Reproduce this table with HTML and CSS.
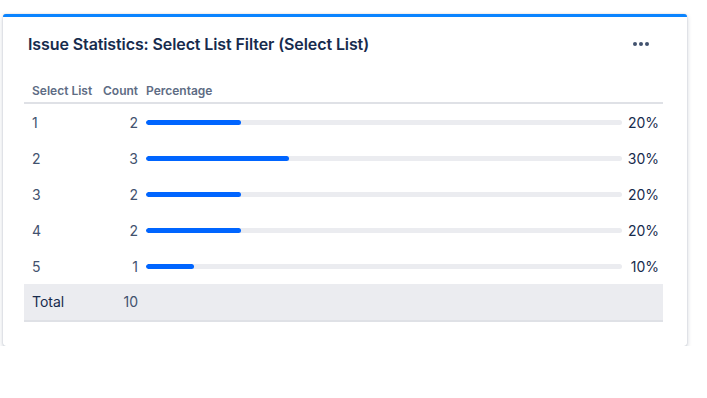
FILE: index.html
```html
<!DOCTYPE html>
<html>
<head>
<meta charset="utf-8">
<link rel="stylesheet" href="styles.css">
</head>
<body>
<div class="card">
  <div class="card-header">
    <h2 class="title">Issue Statistics: Select List Filter (Select List)</h2>
    <div class="menu" aria-label="More"><span></span><span></span><span></span></div>
  </div>
  <div class="stats">
    <div class="row head">
      <div class="c-name">Select List</div>
      <div class="c-count">Count</div>
      <div class="c-bar">Percentage</div>
      <div class="c-pct"></div>
    </div>
    <div class="row">
      <div class="c-name">1</div><div class="c-count">2</div>
      <div class="c-bar"><div class="track"><div class="fill" style="width:20%"></div></div></div>
      <div class="c-pct">20%</div>
    </div>
    <div class="row">
      <div class="c-name">2</div><div class="c-count">3</div>
      <div class="c-bar"><div class="track"><div class="fill" style="width:30%"></div></div></div>
      <div class="c-pct">30%</div>
    </div>
    <div class="row">
      <div class="c-name">3</div><div class="c-count">2</div>
      <div class="c-bar"><div class="track"><div class="fill" style="width:20%"></div></div></div>
      <div class="c-pct">20%</div>
    </div>
    <div class="row">
      <div class="c-name">4</div><div class="c-count">2</div>
      <div class="c-bar"><div class="track"><div class="fill" style="width:20%"></div></div></div>
      <div class="c-pct">20%</div>
    </div>
    <div class="row">
      <div class="c-name">5</div><div class="c-count">1</div>
      <div class="c-bar"><div class="track"><div class="fill" style="width:10%"></div></div></div>
      <div class="c-pct">10%</div>
    </div>
    <div class="row total">
      <div class="c-name">Total</div><div class="c-count">10</div>
      <div class="c-bar"></div>
      <div class="c-pct"></div>
    </div>
  </div>
</div>
</body>
</html>
```
FILE: styles.css
```css
* { box-sizing: border-box; }
html, body { margin: 0; padding: 0; background: #fff; }
body {
  font-family: Inter, "Liberation Sans", Arial, sans-serif;
  color: #172b4d;
  padding: 14px 0 0 3px;
}
.card {
  width: 684px;
  background: #fff;
  border-top: 3px solid #0a84ff;
  border-radius: 3px;
  box-shadow: 0 2px 5px rgba(9, 30, 66, 0.22), 0 0 1px rgba(9, 30, 66, 0.31);
  padding: 0 24px 24px 21px;
}
.card-header {
  box-sizing: content-box;
  height: 32px;
  padding: 11px 14px 0 4px;
  display: flex;
  align-items: center;
  justify-content: space-between;
}
.title {
  margin: 0;
  font-size: 16px;
  font-weight: 600;
  line-height: 20px;
  color: #172b4d;
  letter-spacing: -0.1px;
}
.menu {
  display: flex;
  gap: 2px;
}
.menu span {
  width: 4px;
  height: 4px;
  border-radius: 50%;
  background: #42526e;
}
.stats { margin-top: 20px; }
.row {
  display: grid;
  grid-template-columns: 74px 44px 484px 37px;
  align-items: center;
  height: 36px;
  font-size: 14px;
  color: #42526e;
}
.row.head {
  height: 24px;
  padding-bottom: 4px;
  border-bottom: 2px solid #dfe1e6;
  font-size: 12px;
  font-weight: 600;
  color: #5e6c84;
  align-items: end;
}
.row.head .c-count { text-align: left; padding-left: 5px; }
.c-name { padding-left: 8px; }
.c-count { text-align: right; padding-right: 4px; }
.c-bar { padding: 0 4px; }
.c-pct { text-align: right; padding-right: 4px; color: #172b4d; }
.track {
  height: 5px;
  border-radius: 3px;
  background: #ebecf0;
  overflow: hidden;
}
.fill {
  height: 100%;
  border-radius: 3px;
  background: #0065ff;
}
.row.total {
  background: #ebecf0;
  border-bottom: 2px solid #dfe1e6;
  height: 38px;
  padding-bottom: 1px;
}
.row.total .c-name { color: #172b4d; }
```
